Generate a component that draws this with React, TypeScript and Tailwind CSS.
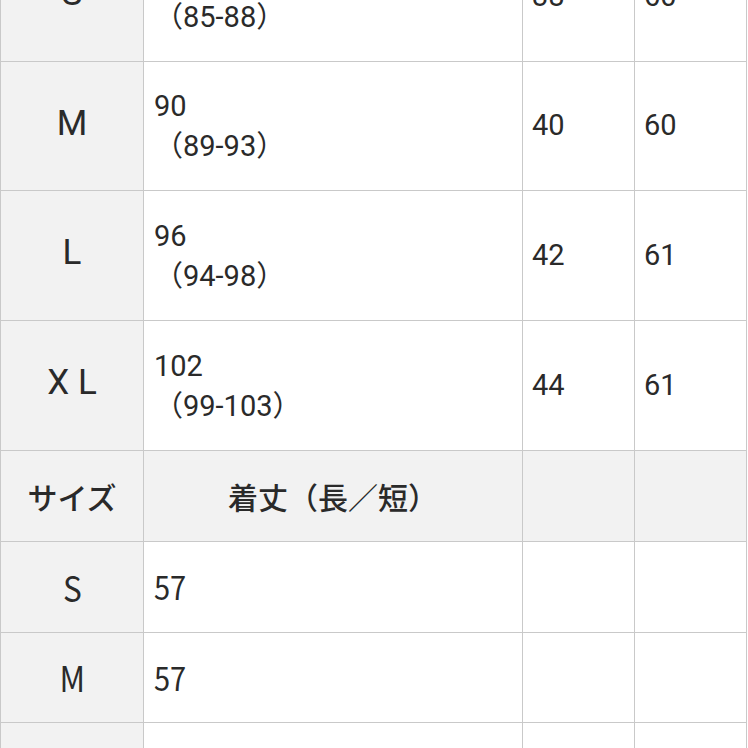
const cell = "border-r border-b border-[#c9c9c9]";
const roboto = "font-['Roboto','Noto_Sans_CJK_JP',sans-serif]";
const cjk = "font-['Noto_Sans_CJK_JP','Noto_Sans',sans-serif]";

const upper = [
  { size: "S", main: "84", range: "（85-88）", a: "38", b: "60", h: "h-[130px]" },
  { size: "M", main: "90", range: "（89-93）", a: "40", b: "60", h: "h-[129px]" },
  { size: "L", main: "96", range: "（94-98）", a: "42", b: "61", h: "h-[130px]" },
  { size: "X L", main: "102", range: "（99-103）", a: "44", b: "61", h: "h-[130px]" },
];

const lower = [
  { size: "S", length: "57", h: "h-[91px]" },
  { size: "M", length: "57", h: "h-[90px]" },
  { size: "L", length: "58", h: "h-[91px]" },
];

export default function App() {
  return (
    <div className="h-[748px] w-[748px] overflow-hidden bg-white text-[#2a2a2a]">
      <div className="-mt-[69px] grid w-[747px] grid-cols-[143px_379px_112px_112px] border-l border-t border-[#c9c9c9]">
        {upper.map((r) => (
          <div key={r.size} className="contents">
            <div className={`${cell} ${r.h} ${roboto} flex items-center justify-center bg-[#f2f2f2] pb-[4px] text-[35px]`}>
              {r.size}
            </div>
            <div className={`${cell} ${r.h} ${roboto} flex flex-col justify-center px-[10px] text-[29px] leading-[40px]`}>
              <span>{r.main}</span>
              <span>{r.range}</span>
            </div>
            <div className={`${cell} ${r.h} ${roboto} flex items-center px-[9px] text-[29px]`}>{r.a}</div>
            <div className={`${cell} ${r.h} ${roboto} flex items-center px-[9px] text-[29px]`}>{r.b}</div>
          </div>
        ))}

        <div className={`${cell} ${cjk} flex h-[91px] items-center justify-center bg-[#f2f2f2] text-[30px] font-medium`}>
          サイズ
        </div>
        <div className={`${cell} ${cjk} flex h-[91px] items-center justify-center bg-[#f2f2f2] text-[30px] font-medium`}>
          着丈（長／短）
        </div>
        <div className={`${cell} h-[91px] bg-[#f2f2f2]`} />
        <div className={`${cell} h-[91px] bg-[#f2f2f2]`} />

        {lower.map((r) => (
          <div key={r.size} className="contents">
            <div className={`${cell} ${r.h} ${cjk} flex items-center justify-center bg-[#f2f2f2] text-[35px]`}>
              <span className="inline-block scale-x-[0.9]">{r.size}</span>
            </div>
            <div className={`${cell} ${r.h} ${cjk} flex items-center px-[10px] text-[33px]`}>
              <span className="inline-block origin-left scale-x-[0.88]">{r.length}</span>
            </div>
            <div className={`${cell} ${r.h}`} />
            <div className={`${cell} ${r.h}`} />
          </div>
        ))}
      </div>
    </div>
  );
}
